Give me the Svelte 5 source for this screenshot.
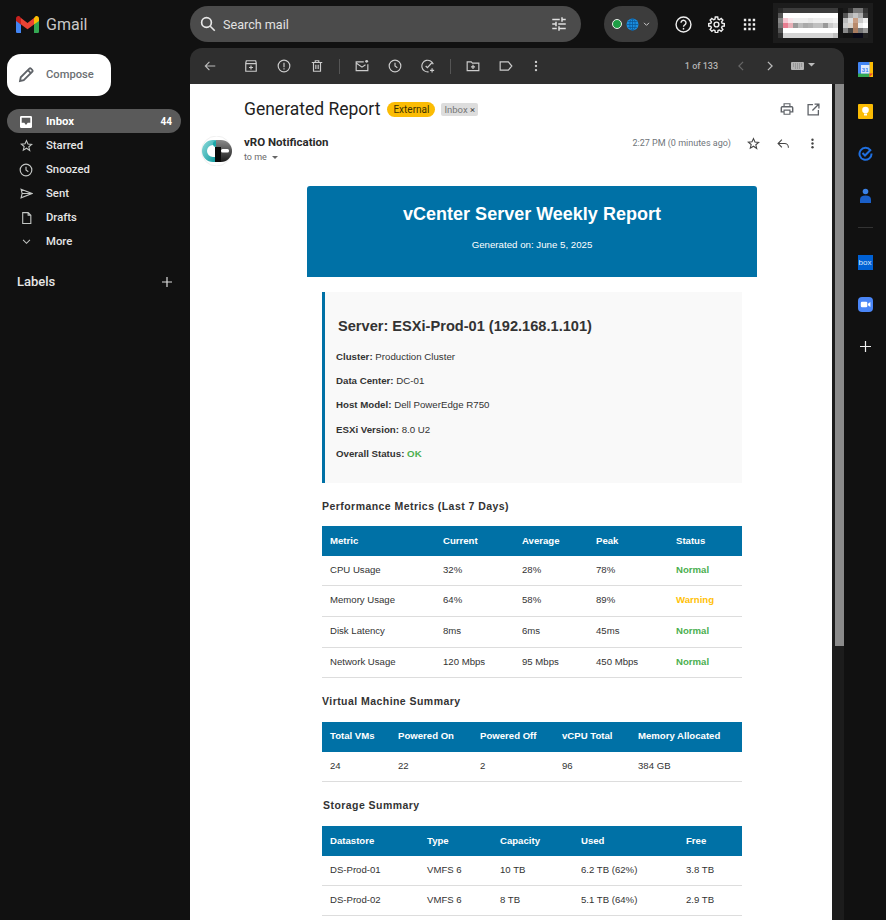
<script>
  const nav = [
    { label: "Starred", icon: "star" },
    { label: "Snoozed", icon: "clock" },
    { label: "Sent", icon: "send" },
    { label: "Drafts", icon: "draft" },
    { label: "More", icon: "more" },
  ];

  const info = [
    ["Cluster:", "Production Cluster"],
    ["Data Center:", "DC-01"],
    ["Host Model:", "Dell PowerEdge R750"],
    ["ESXi Version:", "8.0 U2"],
  ];

  const metrics = [
    ["CPU Usage", "32%", "28%", "78%", "Normal"],
    ["Memory Usage", "64%", "58%", "89%", "Warning"],
    ["Disk Latency", "8ms", "6ms", "45ms", "Normal"],
    ["Network Usage", "120 Mbps", "95 Mbps", "450 Mbps", "Normal"],
  ];

  const storage = [
    ["DS-Prod-01", "VMFS 6", "10 TB", "6.2 TB (62%)", "3.8 TB"],
    ["DS-Prod-02", "VMFS 6", "8 TB", "5.1 TB (64%)", "2.9 TB"],
  ];

  // blurred account block, one colour per mosaic cell (20 x 8)
  const d = "#1c1c1c";
  const w = "#ffffff";
  const mosaic = [
    [d,d,d,d,d,d,d,d,d,d,d,d,d,d,d,d,d,d,d,d],
    [d,"#2a2a2a","#3c3c3c","#3c3c3c","#3c3c3c","#3c3c3c","#3c3c3c","#3c3c3c","#3c3c3c","#3c3c3c","#3c3c3c","#3c3c3c","#3c3c3c","#141414","#1a1a1a","#333","#777","#777","#333",d],
    [d,"#555",w,w,w,w,w,w,w,w,w,w,w,"#141414","#555","#aaa","#c4c4c4","#aaa","#444",d],
    [d,"#888","#f5c6d0","#f8e4e8","#eee","#eee","#eee","#e8e8e8","#eee","#eee","#eee","#eee","#f4f4f4","#141414","#bbb","#ddd","#c89e84","#ccc","#eee",d],
    [d,"#777","#e87d90","#e8b0b8","#999","#bbb","#aaa","#b0b0b0","#c0c0c0","#c0c0c0","#999","#ccc","#ddd","#141414","#ccc","#d8d0c8","#b88a6c","#eee",w,d],
    [d,"#555",w,w,w,w,w,w,w,w,w,w,w,"#141414","#888","#444","#a97c60","#777","#999",d],
    [d,"#333","#d4d4d4","#d4d4d4","#d4d4d4","#d4d4d4","#d4d4d4","#d4d4d4","#d4d4d4","#d4d4d4","#d4d4d4","#d4d4d4","#c0c0c0","#141414","#111","#111","#0a0a18","#0a0a18","#222",d],
    [d,d,d,d,d,d,d,d,d,d,d,d,d,d,d,d,d,d,d,d],
  ];
</script>

<div class="shell">
  <header class="topbar">
    <div class="brand">
      <svg width="23" height="17" viewBox="0 0 23 17">
        <path d="M0 3v12.400c0 .9.6 1.600 1.500 1.600H5V8.500z" fill="#4285f4" />
        <path d="M18 17h3.500c.9 0 1.500-.7 1.500-1.600V3l-5 5.500z" fill="#34a853" />
        <path d="M18 2v6.500L23 5V2.400C23 .4 20.800-.6 19.300.5z" fill="#fbbc04" />
        <path d="M5 8.500V2l6.500 5L18 2v6.500L11.500 13.300z" fill="#ea4335" />
        <path d="M0 2.400V5l5 3.500V2L3.700.5C2.200-.6 0 .4 0 2.400z" fill="#c5221f" />
      </svg>
      <span>Gmail</span>
    </div>

    <div class="search">
      <svg width="18" height="18" viewBox="0 0 24 24" fill="none" stroke="#e8e8e8" stroke-width="2.200">
        <circle cx="10" cy="10" r="6.500" />
        <path d="M15 15l6 6" />
      </svg>
      <span class="search-text">Search mail</span>
      <svg width="18" height="18" viewBox="0 0 24 24" fill="#e0e0e0">
        <path d="M3 17v2h6v-2H3zM3 5v2h10V5H3zm10 16v-2h8v-2h-8v-2h-2v6h2zM7 9v2H3v2h4v2h2V9H7zm14 4v-2H11v2h10zm-6-4h2V7h4V5h-4V3h-2v6z" />
      </svg>
    </div>

    <div class="status-pill">
      <span class="dot"></span>
      <svg width="13" height="13" viewBox="0 0 24 24" fill="none">
        <circle cx="12" cy="12" r="11" fill="#1a8fe0" />
        <path d="M1 12h22M12 1v22M4 6.500h16M4 17.500h16" stroke="#0d5a9a" stroke-width="1.500" />
        <ellipse cx="12" cy="12" rx="5" ry="11" stroke="#0d5a9a" stroke-width="1.500" />
      </svg>
      <svg width="7" height="5" viewBox="0 0 8 6" fill="none" stroke="#ccc" stroke-width="1.200">
        <path d="M1 1l3 3 3-3" />
      </svg>
    </div>

    <div class="top-icons">
      <svg width="17" height="17" viewBox="0 0 24 24" fill="none" stroke="#eee" stroke-width="2">
        <circle cx="12" cy="12" r="10.500" />
        <path d="M8.500 9.500a3.500 3.500 0 1 1 5.600 2.800c-1.200.9-2.100 1.500-2.100 3" />
        <path d="M12 16.800v2.400" />
      </svg>
      <svg width="17" height="17" viewBox="0 0 24 24" fill="none" stroke="#eee" stroke-width="2">
        <circle cx="12" cy="12" r="3.400" />
        <path d="M10.300 1.500h3.400l.5 3 1.900.8 2.500-1.800 2.400 2.400-1.800 2.500.8 1.900 3 .5v3.400l-3 .5-.8 1.900 1.800 2.500-2.400 2.400-2.500-1.800-1.900.8-.5 3h-3.400l-.5-3-1.900-.8-2.500 1.800-2.400-2.400 1.800-2.500-.8-1.900-3-.5v-3.400l3-.5.8-1.900-1.800-2.500 2.400-2.400 2.500 1.800 1.900-.8z" />
      </svg>
      <svg width="17" height="17" viewBox="0 0 24 24" fill="#eee">
        <path d="M4 4h3.400v3.400H4zM10.300 4h3.400v3.400h-3.400zM16.600 4H20v3.400h-3.400zM4 10.300h3.400v3.400H4zM10.300 10.300h3.400v3.400h-3.400zM16.600 10.300H20v3.400h-3.400zM4 16.600h3.400V20H4zM10.300 16.600h3.400V20h-3.400zM16.600 16.600H20V20h-3.400z" />
      </svg>
    </div>

    <div class="mosaic">
      {#each mosaic as row}
        {#each row as c}
          <i style="background:{c}"></i>
        {/each}
      {/each}
    </div>
  </header>

  <div class="columns">
    <aside class="sidebar">
      <button class="compose">
        <svg width="18" height="18" viewBox="0 0 24 24" fill="none" stroke="#5f6368" stroke-width="2.400">
          <path d="M4 20l1-5L16.500 3.500a1.500 1.500 0 0 1 2.100 0l1.900 1.900a1.500 1.500 0 0 1 0 2.100L9 19z" />
          <path d="M14.500 5.500l4 4" />
        </svg>
        <span>Compose</span>
      </button>

      <nav>
        <div class="nav-item active">
          <span class="nav-icon">
            <svg width="12" height="12" viewBox="0 0 14 14">
              <path d="M1.500 0h11A1.500 1.500 0 0 1 14 1.500v11a1.500 1.500 0 0 1-1.500 1.500h-11A1.500 1.500 0 0 1 0 12.500v-11A1.500 1.500 0 0 1 1.500 0zM2 2v6h3l2 2.500L9 8h3V2z" fill="#fff" fill-rule="evenodd" />
            </svg>
          </span>
          <span class="nav-label">Inbox</span>
          <span class="count">44</span>
        </div>
        {#each nav as item}
          <div class="nav-item">
            <span class="nav-icon">
              {#if item.icon === "star"}
                <svg width="13" height="13" viewBox="0 0 24 24" fill="none" stroke="#c4c7c5" stroke-width="2">
                  <path d="M12 3l2.700 6.300 6.800.6-5.200 4.500 1.600 6.700L12 17l-5.900 3.600 1.600-6.700-5.200-4.500 6.800-.6z" />
                </svg>
              {:else if item.icon === "clock"}
                <svg width="14" height="14" viewBox="0 0 24 24" fill="none" stroke="#c4c7c5" stroke-width="2">
                  <circle cx="12" cy="12" r="10" />
                  <path d="M12 6.500V12l4 3" />
                </svg>
              {:else if item.icon === "send"}
                <svg width="13" height="13" viewBox="0 0 24 24" fill="none" stroke="#c4c7c5" stroke-width="2">
                  <path d="M2 4l20 8-20 8 2-8zM4 12h18" />
                </svg>
              {:else if item.icon === "draft"}
                <svg width="13" height="14" viewBox="0 0 24 24" fill="none" stroke="#c4c7c5" stroke-width="2">
                  <path d="M5 2h10l5 5v15H5zM15 2v5h5" />
                </svg>
              {:else}
                <svg width="9" height="6" viewBox="0 0 10 7" fill="none" stroke="#c4c7c5" stroke-width="1.200">
                  <path d="M1 1l4 4 4-4" />
                </svg>
              {/if}
            </span>
            <span class="nav-label">{item.label}</span>
          </div>
        {/each}
      </nav>

      <div class="labels">
        <span>Labels</span>
        <svg width="12" height="12" viewBox="0 0 12 12" stroke="#ddd" stroke-width="1.200">
          <path d="M6 1v10M1 6h10" />
        </svg>
      </div>
    </aside>

    <main class="mailpane">
      <div class="toolbar">
        <div class="tool-group">
          <svg width="14" height="14" viewBox="0 0 24 24" fill="none" stroke="#bbb" stroke-width="2">
            <path d="M21 12H4M11 5l-7 7 7 7" />
          </svg>
          <div class="tools first">
            <svg width="14" height="14" viewBox="0 0 24 24" fill="none" stroke="#ccc" stroke-width="2">
              <path d="M4 3h16l1 4v14H3V7zM3 8h18M12 11v7M8.500 14.500h7" />
            </svg>
            <svg width="14" height="14" viewBox="0 0 24 24" fill="none" stroke="#ccc" stroke-width="2">
              <circle cx="12" cy="12" r="10" />
              <path d="M12 6.500V14M12 16v2" />
            </svg>
            <svg width="14" height="14" viewBox="0 0 24 24" fill="none" stroke="#ccc" stroke-width="2">
              <path d="M3 6h18M9 6V3h6v3M6 6v15h12V6M10 10v7M14 10v7" />
            </svg>
          </div>
          <span class="divider"></span>
          <div class="tools">
            <svg width="14" height="14" viewBox="0 0 24 24" fill="none" stroke="#ccc" stroke-width="2">
              <path d="M15 5H2v15h20V9M2 7l10 7 6-4" />
              <circle cx="20" cy="4" r="2.500" fill="#ccc" stroke="none" />
            </svg>
            <svg width="14" height="14" viewBox="0 0 24 24" fill="none" stroke="#ccc" stroke-width="2">
              <circle cx="12" cy="12" r="10" />
              <path d="M12 6.500V12l4 3" />
            </svg>
            <svg width="14" height="14" viewBox="0 0 24 24" fill="none" stroke="#ccc" stroke-width="2">
              <path d="M21 9a10 10 0 1 0-8 13M8 12l3 3 8-9M19 16v7M15.500 19.500h7" />
            </svg>
          </div>
          <span class="divider"></span>
          <div class="tools">
            <svg width="14" height="14" viewBox="0 0 24 24" fill="none" stroke="#ccc" stroke-width="2">
              <path d="M2 5h7l2 2h11v13H2zM12 10v7M8.500 13.500h7" />
            </svg>
            <svg width="14" height="14" viewBox="0 0 24 24" fill="none" stroke="#ccc" stroke-width="2">
              <path d="M2 5h14l6 7-6 7H2z" />
            </svg>
            <svg class="tool-dots" width="14" height="14" viewBox="0 0 24 24" fill="#ccc">
              <circle cx="12" cy="5" r="2" />
              <circle cx="12" cy="12" r="2" />
              <circle cx="12" cy="19" r="2" />
            </svg>
          </div>
        </div>
        <div class="pager">
          <span>1 of 133</span>
          <svg class="prev" width="8" height="10" viewBox="0 0 8 12" fill="none" stroke="#666" stroke-width="1.500">
            <path d="M6.500 1L1.500 6l5 5" />
          </svg>
          <svg class="next" width="8" height="10" viewBox="0 0 8 12" fill="none" stroke="#bbb" stroke-width="1.500">
            <path d="M1.500 1l5 5-5 5" />
          </svg>
          <svg class="keys" width="25" height="10" viewBox="0 0 25 10">
            <rect x="0" y="1" width="13" height="8" rx="1" fill="#b4b4b4" />
            <path d="M2 3h9M2 5h9M4 7h5" stroke="#7a7a7a" stroke-width="1" stroke-dasharray="1 1" />
            <path d="M17 2h7l-3.500 3.500z" fill="#bbb" />
          </svg>
        </div>
      </div>

      <div class="scroller">
        <div class="message">
          <div class="subject-row">
            <h2>Generated Report</h2>
            <span class="tag-external">External</span>
            <span class="tag-inbox">Inbox <b>×</b></span>
            <div class="subject-actions">
              <svg width="14" height="14" viewBox="0 0 24 24" fill="#5f6368">
                <path d="M6 2h12v5h2a3 3 0 0 1 3 3v8h-5v4H6v-4H1v-8a3 3 0 0 1 3-3h2zm2 2v3h8V4zM3.500 9.500V16H6v-3h12v3h2.500V9.500zM8 15v5h8v-5z" fill-rule="evenodd" />
              </svg>
              <svg width="13" height="13" viewBox="0 0 24 24" fill="none" stroke="#5f6368" stroke-width="2.400">
                <path d="M11 3H2v19h19v-9M14 2h8v8M22 2L10 14" />
              </svg>
            </div>
          </div>

          <div class="sender-row">
            <div class="avatar">
              <svg width="31" height="30" viewBox="0 0 31 30">
                <defs>
                  <linearGradient id="tealFade" x1="0" y1="0" x2="1" y2="1">
                    <stop offset="0" stop-color="#8fdcdc" />
                    <stop offset="1" stop-color="#0f9a9e" />
                  </linearGradient>
                  <linearGradient id="darkFade" x1="0" y1="0" x2="0" y2="1">
                    <stop offset="0" stop-color="#8a8a8a" />
                    <stop offset="1" stop-color="#1a1a1a" />
                  </linearGradient>
                </defs>
                <circle cx="15.500" cy="15" r="15" fill="#fff" stroke="#f0f0f0" />
                <path d="M1 15a11 11 0 0 1 11-11h3v5h-3a6 6 0 0 0 0 12h3v5h-3A11 11 0 0 1 1 15z" fill="url(#tealFade)" />
                <circle cx="15" cy="8" r="3" fill="#1aa6a8" />
                <path d="M15 4h5a11 11 0 0 1 0 22h-5z" fill="url(#darkFade)" />
                <rect x="14" y="11" width="6" height="15" fill="#0a0a0a" />
                <rect x="20" y="13" width="8" height="3.500" rx="1.500" fill="#fff" />
              </svg>
            </div>
            <div class="sender">
              <div class="sender-name">vRO Notification</div>
              <div class="to-me">to me <i class="caret"></i></div>
            </div>
            <div class="sender-actions">
              <span class="time">2:27 PM (0 minutes ago)</span>
              <svg class="star" width="13" height="13" viewBox="0 0 24 24" fill="none" stroke="#444" stroke-width="2">
                <path d="M12 3l2.700 6.300 6.800.6-5.200 4.500 1.600 6.700L12 17l-5.900 3.600 1.600-6.700-5.200-4.500 6.800-.6z" />
              </svg>
              <svg class="reply" width="13" height="13" viewBox="0 0 24 24" fill="none" stroke="#444" stroke-width="2">
                <path d="M9 5l-7 7 7 7M2 12h12a7 7 0 0 1 7 7v1" />
              </svg>
              <svg class="dots" width="13" height="13" viewBox="0 0 24 24" fill="#444">
                <circle cx="12" cy="5" r="2.200" />
                <circle cx="12" cy="12" r="2.200" />
                <circle cx="12" cy="19" r="2.200" />
              </svg>
            </div>
          </div>

          <div class="report">
            <div class="report-head">
              <h1>vCenter Server Weekly Report</h1>
              <p>Generated on: June 5, 2025</p>
            </div>

            <div class="report-body">
              <div class="server-box">
                <h3>Server: ESXi-Prod-01 (192.168.1.101)</h3>
                {#each info as row}
                  <p><strong>{row[0]}</strong> {row[1]}</p>
                {/each}
                <p><strong>Overall Status:</strong> <span class="ok">OK</span></p>
              </div>

              <h4 class="h-perf">Performance Metrics (Last 7 Days)</h4>
              <table class="metrics">
                <colgroup>
                  <col style="width:113px" /><col style="width:79px" /><col style="width:74px" /><col style="width:80px" /><col />
                </colgroup>
                <thead>
                  <tr><th>Metric</th><th>Current</th><th>Average</th><th>Peak</th><th>Status</th></tr>
                </thead>
                <tbody>
                  {#each metrics as m}
                    <tr>
                      <td>{m[0]}</td><td>{m[1]}</td><td>{m[2]}</td><td>{m[3]}</td>
                      <td class={m[4] === "Normal" ? "normal" : "warning"}>{m[4]}</td>
                    </tr>
                  {/each}
                </tbody>
              </table>

              <h4 class="h-vm">Virtual Machine Summary</h4>
              <table>
                <colgroup>
                  <col style="width:68px" /><col style="width:82px" /><col style="width:82px" /><col style="width:76px" /><col />
                </colgroup>
                <thead>
                  <tr><th>Total VMs</th><th>Powered On</th><th>Powered Off</th><th>vCPU Total</th><th>Memory Allocated</th></tr>
                </thead>
                <tbody>
                  <tr><td>24</td><td>22</td><td>2</td><td>96</td><td>384 GB</td></tr>
                </tbody>
              </table>

              <h4 class="h-storage">Storage Summary</h4>
              <table class="stores">
                <colgroup>
                  <col style="width:97px" /><col style="width:73px" /><col style="width:81px" /><col style="width:105px" /><col />
                </colgroup>
                <thead>
                  <tr><th>Datastore</th><th>Type</th><th>Capacity</th><th>Used</th><th>Free</th></tr>
                </thead>
                <tbody>
                  {#each storage as s}
                    <tr>
                      {#each s as cell}
                        <td>{cell}</td>
                      {/each}
                    </tr>
                  {/each}
                </tbody>
              </table>
            </div>
          </div>
        </div>
        <div class="scrollbar"><div class="thumb"></div></div>
      </div>
    </main>

    <aside class="rail">
      <svg width="15" height="15" viewBox="0 0 15 15">
        <rect width="15" height="15" rx="1" fill="#4285f4" />
        <rect x="0" y="11.500" width="15" height="3.500" fill="#34a853" />
        <rect x="11.500" y="0" width="3.500" height="15" fill="#fbbc04" />
        <rect x="3" y="3" width="8.500" height="8.500" fill="#dfe9fb" />
        <path d="M11.500 15L15 11.500h-3.500z" fill="#ea4335" />
        <text x="7.200" y="10" text-anchor="middle" class="cal">31</text>
      </svg>
      <svg width="15" height="15" viewBox="0 0 15 15">
        <rect width="15" height="15" rx="1" fill="#fbbc04" />
        <circle cx="7.500" cy="6" r="3.300" fill="#fff" />
        <rect x="6" y="9.500" width="3" height="2" fill="#fff" />
      </svg>
      <svg width="15" height="15" viewBox="0 0 15 15" fill="none" stroke="#1f6fe0" stroke-width="2">
        <path d="M12.500 4.500a6 6 0 1 0 1 3" />
        <path d="M4.500 7l2.500 2.500 6-6" />
      </svg>
      <svg width="15" height="15" viewBox="0 0 15 15" fill="#1a5fc8">
        <circle cx="7.500" cy="3.500" r="2.800" fill="#3b82e6" />
        <path d="M2 15v-3.500C2 9 4 7.500 7.500 7.500S13 9 13 11.500V15z" />
      </svg>
      <span class="rail-line"></span>
      <div class="box-logo">box</div>
      <svg width="15" height="15" viewBox="0 0 15 15">
        <rect width="15" height="15" rx="4" fill="#4a86f7" />
        <rect x="2.800" y="4.800" width="6.500" height="5.400" rx="1.200" fill="#fff" />
        <path d="M10 6.800l2.400-1.700v4.800L10 8.200z" fill="#fff" />
      </svg>
      <svg class="rail-plus" width="11" height="11" viewBox="0 0 11 11" stroke="#eee" stroke-width="1.200">
        <path d="M5.500 0v11M0 5.500h11" />
      </svg>
    </aside>
  </div>
</div>

<style>
  :global(body) {
    margin: 0;
    background: #111111;
    font-family: Roboto, "Liberation Sans", sans-serif;
  }
  .shell {
    height: 920px;
    overflow: hidden;
    display: flex;
    flex-direction: column;
  }
  .topbar {
    height: 48px;
    display: flex;
    align-items: center;
    flex: none;
  }
  .brand {
    width: 174px;
    padding-left: 16px;
    display: flex;
    align-items: center;
    gap: 7px;
    color: #c8c8c8;
    font-size: 16px;
  }
  .search {
    width: 391px;
    height: 36px;
    border-radius: 18px;
    background: #4b4b4b;
    display: flex;
    align-items: center;
    padding: 0 13px 0 9px;
    box-sizing: border-box;
    color: #e2e2e2;
    font-size: 12.600px;
  }
  .search-text {
    margin-left: 6px;
    flex: 1;
  }
  .status-pill {
    margin-left: 23px;
    width: 54px;
    height: 36px;
    border-radius: 18px;
    background: #3c3c3c;
    display: flex;
    align-items: center;
    justify-content: center;
    gap: 4px;
  }
  .dot {
    width: 8px;
    height: 8px;
    border-radius: 50%;
    background: #1e9e45;
    border: 1px solid #eee;
  }
  .top-icons {
    margin-left: 17px;
    display: flex;
    gap: 16px;
    width: 98px;
  }
  .mosaic {
    align-self: flex-start;
    margin-top: 3px;
    width: 100px;
    height: 40px;
    display: grid;
    grid-template-columns: repeat(20, 5px);
    grid-template-rows: repeat(8, 5px);
  }
  .columns {
    flex: 1;
    display: flex;
    min-height: 0;
  }
  .sidebar {
    width: 190px;
    flex: none;
    color: #e6e6e6;
    font-size: 11.300px;
  }
  .compose {
    margin: 6px 0 0 7px;
    width: 104px;
    height: 42px;
    border: none;
    border-radius: 14px;
    background: #fff;
    display: flex;
    align-items: center;
    gap: 11px;
    padding: 0 0 0 10px;
    color: #6b6f73;
    font: 500 11.200px Roboto, sans-serif;
  }
  .compose span {
    padding-bottom: 2px;
  }
  nav {
    margin-top: 13px;
  }
  .nav-item {
    width: 174px;
    margin-left: 7px;
    height: 24px;
    display: flex;
    align-items: center;
    font-weight: 500;
    box-sizing: border-box;
    padding: 1px 9px 0 0;
  }
  .nav-item.active {
    background: #5a5a5a;
    border-radius: 12px;
    color: #fff;
    font-weight: 700;
  }
  .nav-icon {
    width: 39px;
    padding-right: 1px;
    box-sizing: border-box;
    display: flex;
    justify-content: center;
  }
  .nav-label {
    flex: 1;
  }
  .count {
    font-size: 10px;
  }
  .labels {
    margin: 21px 0 0 17px;
    width: 156px;
    display: flex;
    justify-content: space-between;
    align-items: center;
    font-size: 13px;
    font-weight: 500;
  }
  .mailpane {
    width: 654px;
    flex: none;
    display: flex;
    flex-direction: column;
    min-height: 0;
  }
  .toolbar {
    height: 36px;
    flex: none;
    background: #2f2f2f;
    border-radius: 12px 12px 0 0;
    display: flex;
    align-items: center;
    justify-content: space-between;
    padding: 0 28px 0 13px;
  }
  .tool-group {
    display: flex;
    align-items: center;
  }
  .tools {
    display: flex;
    gap: 19px;
  }
  .tools.first {
    margin-left: 27px;
  }
  .tool-dots {
    margin-left: -3px;
  }
  .divider {
    width: 1px;
    height: 15px;
    background: #555;
    margin: 0 15px;
  }
  .pager {
    display: flex;
    align-items: center;
    color: #b4b4b4;
    font-size: 9px;
    font-weight: 500;
  }
  .prev {
    margin-left: 19px;
  }
  .next {
    margin-left: 21px;
  }
  .keys {
    margin-left: 17px;
  }
  .scroller {
    flex: 1;
    display: flex;
    min-height: 0;
  }
  .message {
    width: 642px;
    background: #fff;
    overflow: hidden;
    flex: none;
  }
  .scrollbar {
    width: 12px;
    background: #1c1c1c;
    padding-left: 3px;
    box-sizing: border-box;
  }
  .thumb {
    height: 562px;
    background: #8a8a8a;
  }
  .subject-row {
    display: flex;
    align-items: center;
    height: 52px;
    padding: 0 0 2px 54px;
    box-sizing: border-box;
  }
  h2 {
    margin: 0;
    font: 400 17.500px Roboto, sans-serif;
    color: #1f1f1f;
  }
  .tag-external {
    margin-left: 7px;
    background: #fbbc04;
    border-radius: 8px;
    height: 15px;
    line-height: 15px;
    padding: 0 6px;
    font-size: 10px;
    color: #3c3000;
  }
  .tag-inbox {
    margin-left: 6px;
    background: #dddddd;
    border-radius: 2px;
    height: 13px;
    line-height: 13px;
    padding: 0 3px;
    font-size: 9.500px;
    color: #777;
  }
  .tag-inbox b {
    font-weight: 400;
    color: #444;
  }
  .subject-actions {
    margin-left: auto;
    margin-right: 12px;
    display: flex;
    align-items: center;
    gap: 13px;
  }
  .sender-row {
    display: flex;
    height: 50px;
    padding-left: 11px;
    align-items: flex-start;
  }
  .sender {
    margin-left: 12px;
  }
  .sender-name {
    font-weight: 700;
    font-size: 11.500px;
    color: #2a2a2a;
    line-height: 13px;
  }
  .to-me {
    font-size: 9px;
    color: #6a6a6a;
    line-height: 16px;
  }
  .caret {
    display: inline-block;
    margin-left: 3px;
    border: 3px solid transparent;
    border-top: 3px solid #666;
    border-bottom: none;
    vertical-align: middle;
  }
  .sender-actions {
    margin-left: auto;
    margin-right: 13px;
    display: flex;
    align-items: center;
    height: 14px;
  }
  .time {
    font-size: 9px;
    color: #70757a;
  }
  .star {
    margin-left: 16px;
  }
  .reply {
    margin-left: 17px;
  }
  .dots {
    margin-left: 16px;
  }
  .report {
    width: 450px;
    margin-left: 117px;
    font-family: "Liberation Sans", Arial, sans-serif;
    color: #333;
  }
  .report-head {
    background: #0071a6;
    border-radius: 3px 3px 0 0;
    height: 91px;
    text-align: center;
    color: #fff;
    padding-top: 18px;
    box-sizing: border-box;
  }
  h1 {
    margin: 0;
    font-size: 18px;
    line-height: 21px;
  }
  .report-head p {
    margin: 14px 0 0;
    font-size: 9.700px;
    line-height: 12px;
  }
  .report-body {
    padding: 15px;
  }
  .server-box {
    background: #f9f9f9;
    border-left: 3px solid #0071a6;
    padding: 26px 11px 17px 11px;
    height: 191px;
    box-sizing: border-box;
  }
  h3 {
    margin: 0 0 11px;
    font-size: 14.600px;
    line-height: 16px;
    padding-left: 2px;
  }
  .server-box p {
    margin: 0;
    font-size: 9.700px;
    line-height: 24.200px;
  }
  .ok,
  .normal {
    color: #4caf50;
    font-weight: 700;
  }
  .warning {
    color: #ffc107;
    font-weight: 700;
  }
  h4 {
    margin: 0;
    font-size: 10.500px;
    line-height: 14px;
    letter-spacing: 0.450px;
    color: #333;
  }
  .h-perf {
    margin-top: 16px;
    margin-bottom: 13px;
  }
  .h-vm {
    margin-top: 16px;
    margin-bottom: 14px;
  }
  .h-storage {
    margin-top: 16px;
    margin-bottom: 14px;
    padding-left: 1px;
  }
  table {
    width: 420px;
    border-collapse: collapse;
    table-layout: fixed;
    font-size: 9.600px;
  }
  th {
    background: #0071a6;
    color: #fff;
    text-align: left;
    height: 30px;
    padding: 0 8px 2px;
    box-sizing: border-box;
    font-weight: 700;
  }
  td {
    height: 30px;
    padding: 0 8px 2px;
    box-sizing: border-box;
    border-bottom: 1px solid #ddd;
  }
  .metrics tbody tr:first-child td,
  .stores tbody tr:first-child td {
    height: 29px;
  }
  .metrics tbody tr:nth-child(2) td,
  .metrics tbody tr:nth-child(3) td {
    height: 31px;
  }
  .cal {
    font: 700 6px "Liberation Sans", sans-serif;
    fill: #4285f4;
  }
  .rail {
    width: 42px;
    flex: none;
    display: flex;
    flex-direction: column;
    align-items: center;
    padding-top: 14px;
    gap: 27px;
  }
  .rail-line {
    width: 15px;
    height: 1px;
    background: #333;
    margin: -3px 0 0;
  }
  .box-logo {
    width: 15px;
    height: 15px;
    background: #0061d5;
    color: #d8e6fa;
    font: 400 8px "Liberation Sans", sans-serif;
    line-height: 15px;
    text-align: center;
  }
  .rail-plus {
    margin-top: 2px;
  }
</style>
